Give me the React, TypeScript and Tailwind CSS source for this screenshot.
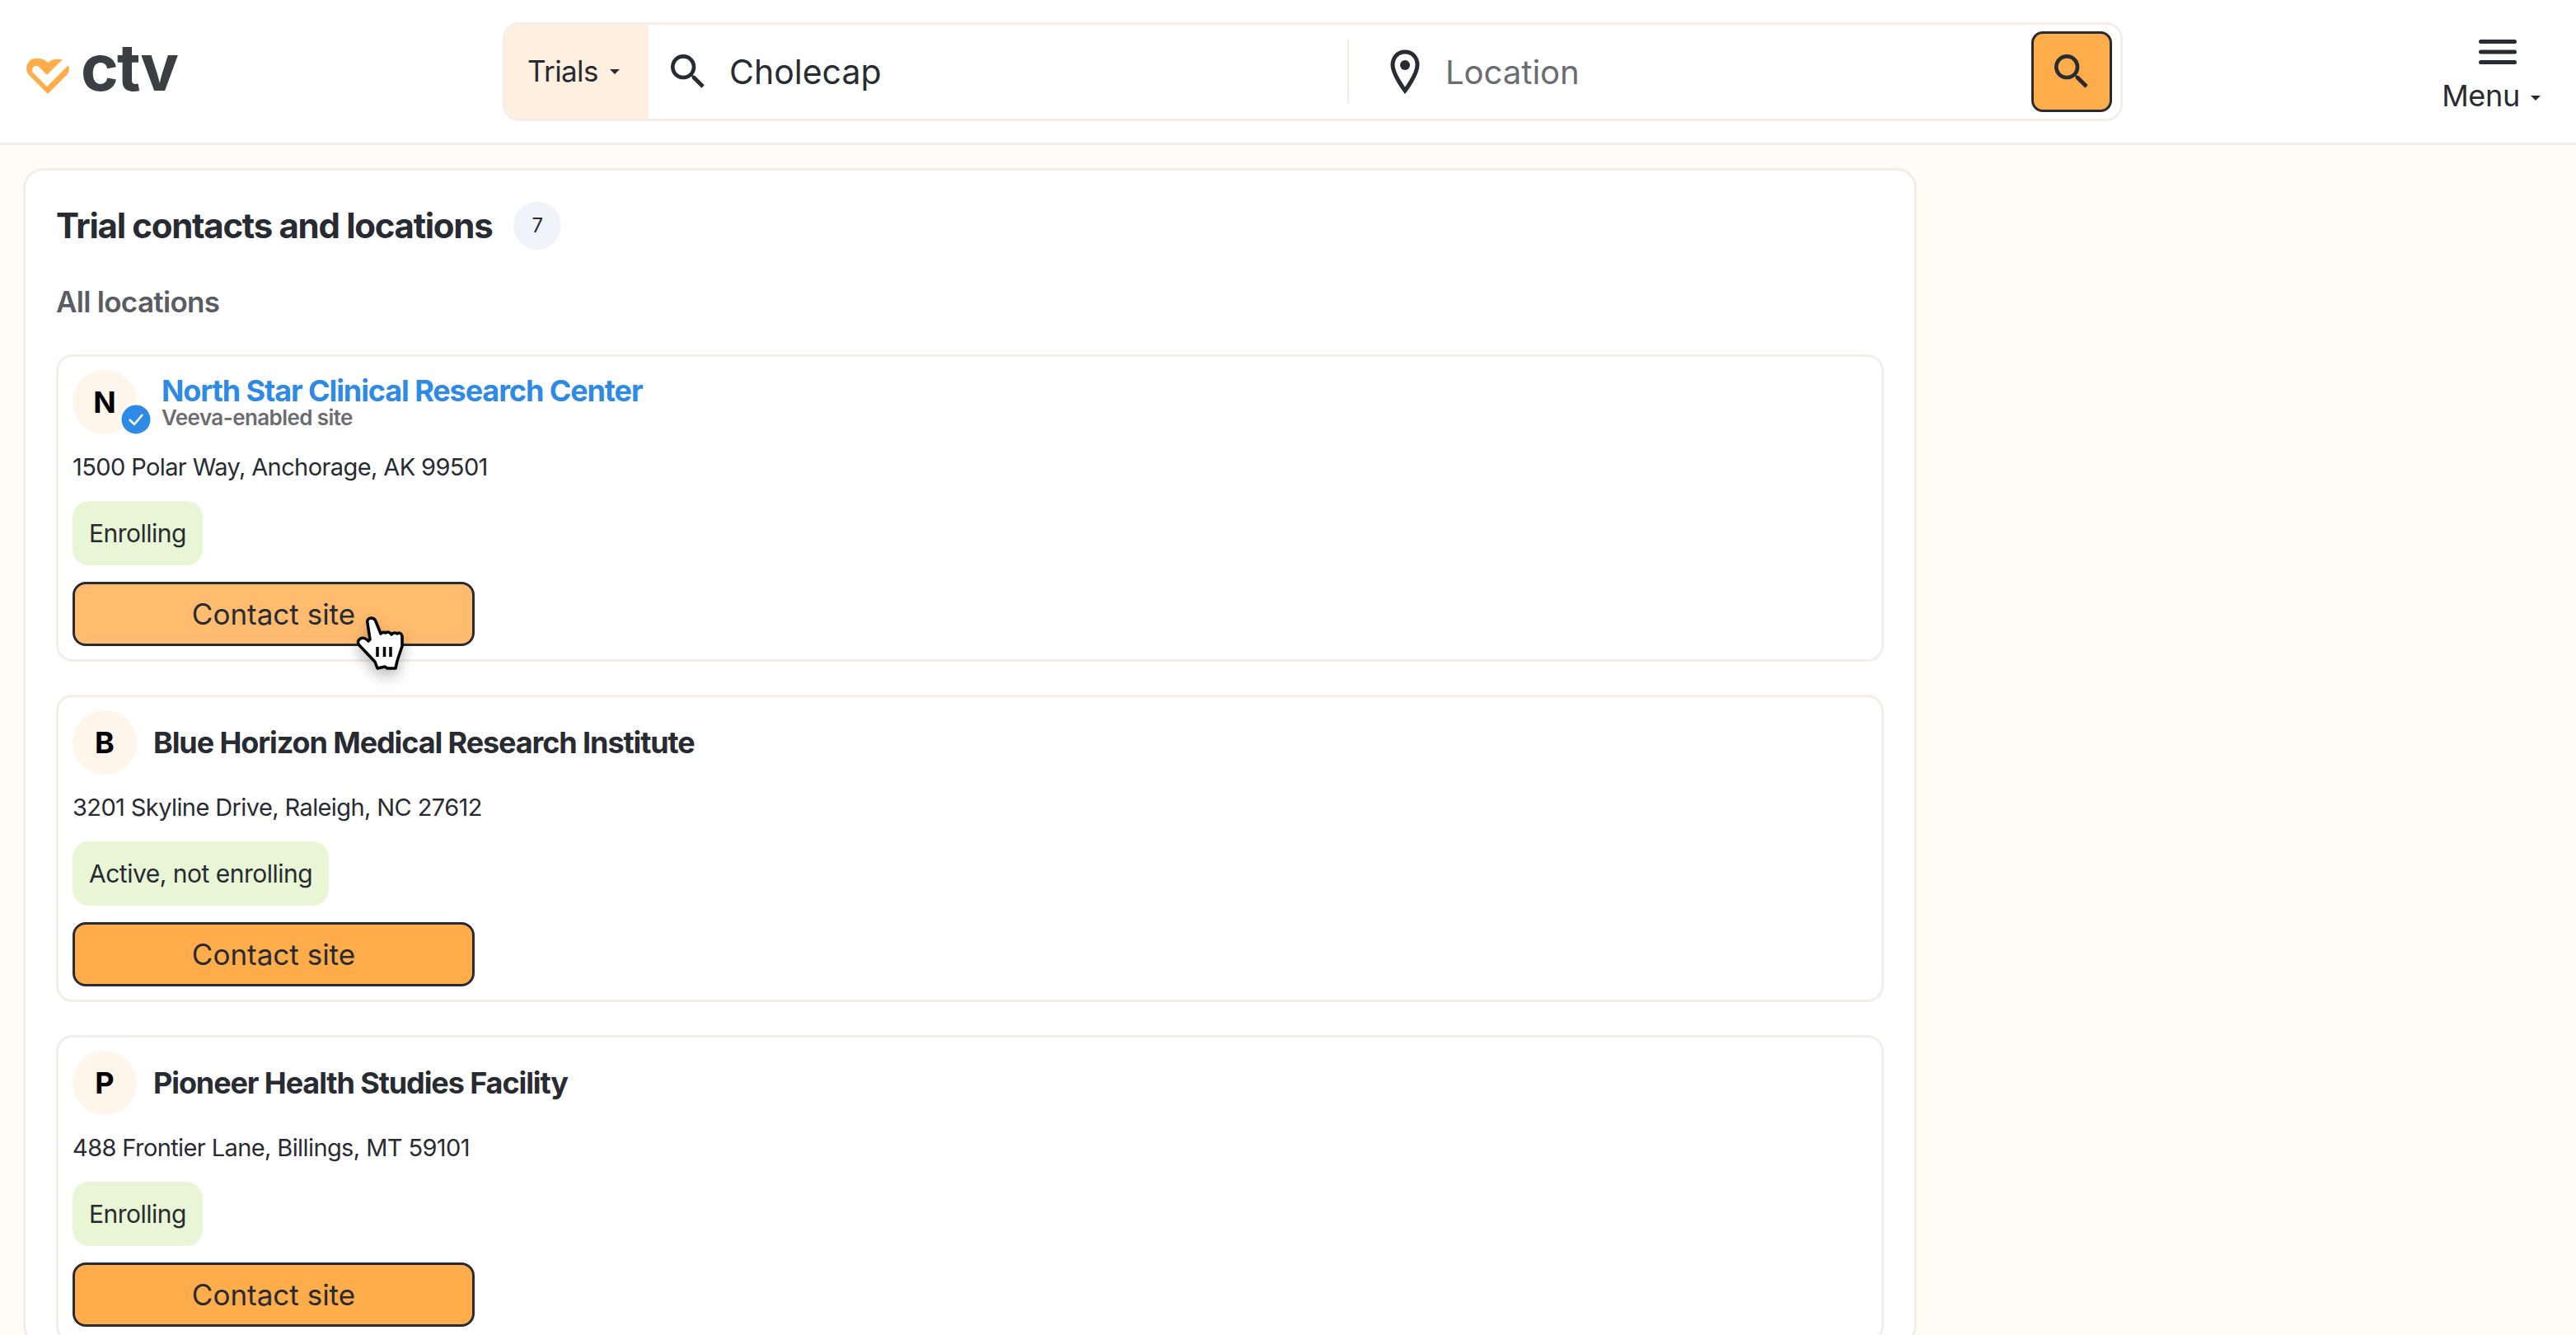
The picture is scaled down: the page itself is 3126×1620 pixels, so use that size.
const font = "font-['Inter','Noto_Sans',sans-serif]";

function CtvLogo() {
  return (
    <div className="flex items-end">
      <svg width="52" height="44" viewBox="0 0 52 44" className="ml-[2px] mb-[2px]">
        <path
          d="M26 43 L3 20 C-3 13 1 1 10 0 C17 -1 22 1 26 5 C30 1 36 0 43 1 C51 3 55 13 49 20 Z"
          fill="#ffad4a"
        />
        <path d="M12 14 L25 27 L50 2" fill="none" stroke="#ffffff" strokeWidth="10" strokeLinecap="round" />
      </svg>
      <span className="ml-[14px] h-[60px] text-[78px] leading-[50px] font-bold tracking-[-2px] text-[#3d3e43]">ctv</span>
    </div>
  );
}

function SearchIcon({ size }: { size: number }) {
  return (
    <svg width={size} height={size} viewBox="0 0 24 24" fill="#292b33">
      <path d="M15.5 14h-.79l-.28-.27A6.47 6.47 0 0 0 16 9.5 6.5 6.5 0 1 0 9.5 16c1.61 0 3.09-.59 4.23-1.57l.27.28v.79l5 4.99L20.49 19l-4.99-5zm-6 0C7.01 14 5 11.99 5 9.5S7.01 5 9.5 5 14 7.01 14 9.5 11.99 14 9.5 14z" />
    </svg>
  );
}

function Caret({ className }: { className: string }) {
  return <span className={`${className} inline-block border-x-[6px] border-t-[6px] border-x-transparent border-t-[#292b33] align-middle`} />;
}

function HandCursor() {
  return (
    <svg width="60" height="66" viewBox="0 0 60 66" className="absolute left-[344px] top-[42px] drop-shadow-[0_8px_8px_rgba(0,0,0,0.25)]">
      <path
        d="M18 2 C15 2 13 5 14 8 L17 28 L15 30 C12 26 7 25 4 28 C2 30 2 33 4 35 L23 55 L26 63 L35 61 L38 63 L48 63 L50 54 L56 36 L56 24 C55 20 52 19 50 21 C48 19 45 20 43 22 C41 19 38 18 36 20 C34 19 32 19 30 21 L24 6 C23 3 20 2 18 2 Z"
        fill="#ffffff"
        stroke="#000000"
        strokeWidth="3.5"
        strokeLinejoin="round"
      />
      <path d="M26 37 V49 M34.5 37 V49 M42 37 V49" stroke="#000000" strokeWidth="3.5" />
    </svg>
  );
}

type Site = { letter: string; name: string; address: string; status: string; veeva?: boolean; hover?: boolean };

const sites: Site[] = [
  { letter: "N", name: "North Star Clinical Research Center", address: "1500 Polar Way, Anchorage, AK 99501", status: "Enrolling", veeva: true, hover: true },
  { letter: "B", name: "Blue Horizon Medical Research Institute", address: "3201 Skyline Drive, Raleigh, NC 27612", status: "Active, not enrolling" },
  { letter: "P", name: "Pioneer Health Studies Facility", address: "488 Frontier Lane, Billings, MT 59101", status: "Enrolling" },
];

function SiteCard({ site }: { site: Site }) {
  return (
    <div className="rounded-[20px] border-[3px] border-[#f3efe8] bg-white px-[17px] pt-[16px] pb-[16px]">
      <div className="flex h-[78px] items-center">
        <div className="relative flex h-[78px] w-[78px] shrink-0 items-center justify-center rounded-full bg-[#fff5ea] text-[36px] font-bold text-black">
          {site.letter}
          {site.veeva && (
            <svg width="40" height="40" viewBox="0 0 40 40" className="absolute left-[57px] top-[40px]">
              <circle cx="20" cy="20" r="19" fill="#2f8ae6" stroke="#ffffff" strokeWidth="3" />
              <path d="M12 20 L18 26 L28 14" fill="none" stroke="#ffffff" strokeWidth="2.5" />
            </svg>
          )}
        </div>
        {site.veeva ? (
          <div className="ml-[30px] flex flex-col">
            <span className="text-[36px] leading-[38px] font-bold tracking-[-1.1px] text-[#2f8ae6]">{site.name}</span>
            <span className="text-[26px] leading-[28px] font-semibold tracking-[-0.6px] text-[#6a6c72]">Veeva-enabled site</span>
          </div>
        ) : (
          <span className="ml-[20px] text-[36px] font-bold tracking-[-1.1px] text-[#292b33]">{site.name}</span>
        )}
      </div>
      <div className="mt-[20px] text-[29px] leading-[40px] tracking-[-0.6px] text-[#292b33]">{site.address}</div>
      <div className="mt-[21px] flex h-[78px] w-fit items-center rounded-[20px] bg-[#e9f6d5] px-[20px] text-[30px] tracking-[-0.5px] text-[#292b33]">
        {site.status}
      </div>
      <div className="relative mt-[20px] w-[488px]">
        <button
          className={`flex h-[78px] w-[488px] items-center justify-center rounded-[16px] border-[3px] border-[#292b33] text-[35px] text-[#292b33] ${
            site.hover ? "bg-[#ffbc6e]" : "bg-[#ffad4a]"
          }`}
        >
          Contact site
        </button>
        {site.hover && <HandCursor />}
      </div>
    </div>
  );
}

export default function App() {
  return (
    <div className={`${font} h-[1620px] overflow-hidden bg-[#fffbf6]`}>
      {/* Header */}
      <header className="flex h-[176px] items-center border-b-[3px] border-[#f3efe8] bg-white pl-[30px] pr-[43px]">
        <div className="w-[580px]">
          <CtvLogo />
        </div>
        <div className="flex h-[120px] w-[1966px] items-center rounded-[20px] border-[3px] border-[#f3efe8] bg-white">
          <div className="flex h-full w-[174px] items-center rounded-l-[18px] bg-[#ffefdf] pl-[27px] text-[35px] tracking-[-0.6px] text-[#292b33]">
            Trials
            <Caret className="ml-[14px]" />
          </div>
          <div className="ml-[20px]">
            <SearchIcon size={56} />
          </div>
          <span className="ml-[22px] w-[750px] pt-[2px] text-[41px] text-[#292b33]">Cholecap</span>
          <div className="h-[78px] w-[2px] bg-[#f0ede8]" />
          <svg width="42" height="54" viewBox="0 0 42 54" fill="none" className="ml-[47px]">
            <path d="M21 3 C11 3 6 11 6 19 C6 30 21 50 21 50 C21 50 36 30 36 19 C36 11 31 3 21 3 Z" stroke="#292b33" strokeWidth="5" />
            <circle cx="21" cy="19" r="6" fill="#292b33" />
          </svg>
          <span className="ml-[28px] w-[711px] pt-[2px] text-[40px] text-[#6a6c72]">Location</span>
          <button className="flex h-[98px] w-[98px] items-center justify-center rounded-[14px] border-[3px] border-[#292b33] bg-[#ffad4a]">
            <SearchIcon size={56} />
          </button>
        </div>
        <div className="ml-auto flex flex-col items-center pt-[11px]">
          <svg width="46" height="32" viewBox="0 0 46 32" fill="#292b33" className="ml-[16px]">
            <rect width="46" height="5" rx="2.5" y="1" />
            <rect width="46" height="5" rx="2.5" y="13.5" />
            <rect width="46" height="5" rx="2.5" y="26" />
          </svg>
          <div className="mt-[15px] text-[36px] leading-[44px] tracking-[-0.3px] text-[#292b33]">
            Menu
            <Caret className="ml-[13px]" />
          </div>
        </div>
      </header>

      {/* Locations panel */}
      <main className="ml-[28px] mt-[28px] w-[2298px] rounded-[24px] border-[3px] border-[#f3efe8] bg-white px-[37px] pt-[38px]">
        <div className="flex items-center">
          <h2 className="text-[42px] leading-[58px] font-bold tracking-[-1.3px] text-[#292b33]">Trial contacts and locations</h2>
          <span className="ml-[26px] flex h-[58px] w-[58px] items-center justify-center rounded-full bg-[#f0f3f8] text-[24px] text-[#292b33]">7</span>
        </div>
        <h3 className="mt-[39px] text-[35px] leading-[48px] font-semibold tracking-[-0.7px] text-[#5a5c64]">All locations</h3>
        <div className="mt-[40px] flex flex-col gap-[40px]">
          {sites.map((site) => (
            <SiteCard key={site.letter} site={site} />
          ))}
        </div>
      </main>
    </div>
  );
}
